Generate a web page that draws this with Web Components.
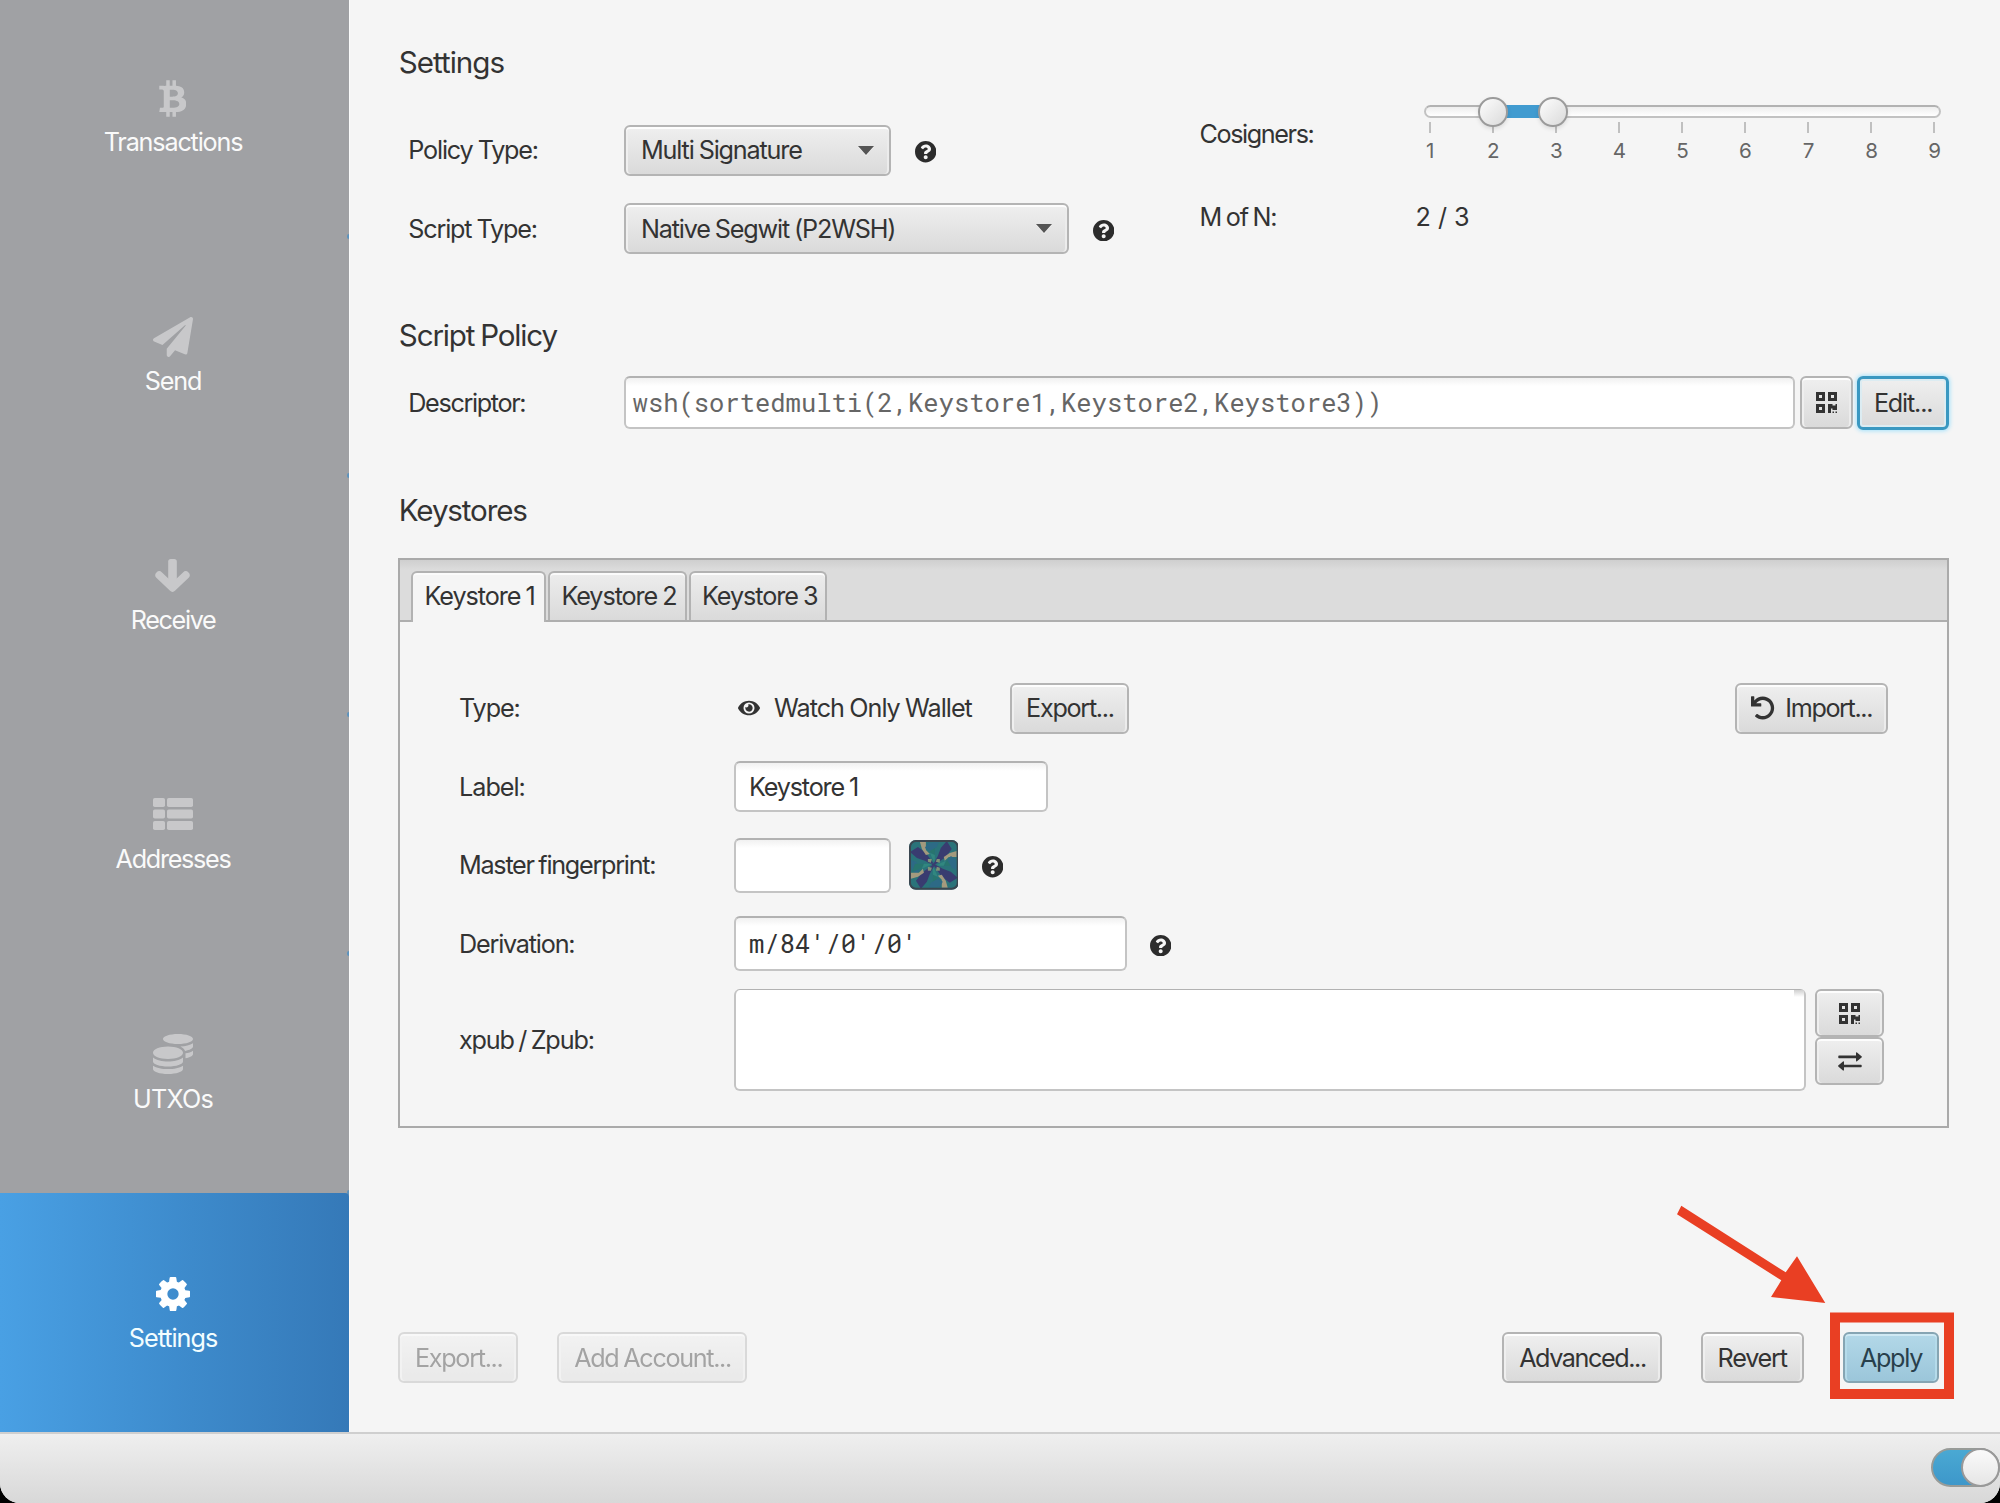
<!DOCTYPE html>
<html lang="en">
<head>
<meta charset="utf-8">
<title>Wallet Settings</title>
<style>
    html, body { margin: 0; height: 100%; background: #000; }
    body {
        overflow: hidden;
        font-family: Inter, "Open Sans", sans-serif;
        font-size: 25.2px;
        letter-spacing: -1.18px;
        word-spacing: -0.8px;
        line-height: 32px;
        color: #333;
        white-space: nowrap;
    }
    .pair { display: flex; height: 171.2px; }
    .left { width: 801.5px; padding-top: 43px; box-sizing: border-box; display: flex; flex-direction: column; gap: 28px; }
    .right { flex: 1; display: flex; flex-direction: column; }
    .actions { display: flex; align-items: center; margin-top: 204.3px; }
</style>
</head>
<body>
<wallet-window>
    <nav-item slot="nav" icon="bitcoin">Transactions</nav-item>
    <nav-item slot="nav" icon="plane">Send</nav-item>
    <nav-item slot="nav" icon="down" style="letter-spacing:-1.35px">Receive</nav-item>
    <nav-item slot="nav" icon="list" style="letter-spacing:-1.3px">Addresses</nav-item>
    <nav-item slot="nav" icon="coins" style="letter-spacing:-.8px">UTXOs</nav-item>
    <nav-item slot="nav" icon="cog" style="letter-spacing:-1px" selected>Settings</nav-item>

    <section-title style="margin-top:42px">Settings</section-title>
    <div class="pair">
        <div class="left">
            <form-row style="--h:50.4px"><span slot="label">Policy Type:</span>
                <combo-box style="width:267px">Multi Signature</combo-box>
                <help-mark style="margin-left:24px"></help-mark>
            </form-row>
            <form-row style="--h:50.4px"><span slot="label">Script Type:</span>
                <combo-box style="width:445px">Native Segwit (P2WSH)</combo-box>
                <help-mark style="margin-left:23.5px"></help-mark>
            </form-row>
        </div>
        <div class="right">
            <form-row style="--h:76px; --indent:0px; --label:224px; padding-top:13.5px"><span slot="label" style="letter-spacing:-1.4px">Cosigners:</span>
                <range-slider min="1" max="9" low="2" high="3"></range-slider>
            </form-row>
            <form-row style="--h:40px; --indent:0px; --label:216px; padding-top:25px"><span slot="label" style="letter-spacing:-1.2px; word-spacing:-1.2px">M of N:</span><span style="letter-spacing:0; word-spacing:0">2 / 3</span></form-row>
        </div>
    </div>

    <section-title style="margin-top:61.8px; letter-spacing:-1.15px; word-spacing:-1.4px">Script Policy</section-title>
    <form-row style="--h:54px; margin-top:21px"><span slot="label" style="letter-spacing:-1.35px">Descriptor:</span>
        <text-field mono dim style="width:1171.4px; height:53px; --pad:6.6px">wsh(sortedmulti(2,Keystore1,Keystore2,Keystore3))</text-field>
        <fx-button style="width:53.7px; height:53px; margin-left:4.4px"><fx-icon name="qr" style="width:21px; height:21px"></fx-icon></fx-button>
        <fx-button focused style="width:92.5px; height:54px; margin-left:3.4px">Edit...</fx-button>
    </form-row>

    <section-title style="margin-top:60px; letter-spacing:-1.15px">Keystores</section-title>
    <keystore-tabs style="margin-top:28.4px">
        <form-row style="--h:50.4px; margin-top:61.2px"><span slot="label" style="letter-spacing:-1.1px">Type:</span>
            <fx-icon name="eye" style="width:22px; height:20px; margin-left:4px"></fx-icon>
            <span style="width:235.5px; margin-left:14px; letter-spacing:-1px">Watch Only Wallet</span>
            <fx-button style="width:119.8px; letter-spacing:-1.3px; --dx:1px">Export...</fx-button>
            <fx-button style="width:153px; margin-left:605.4px; letter-spacing:-1.4px; --dx:1px"><fx-icon name="undo" style="width:23.5px; height:24px; margin-right:10.5px"></fx-icon>Import...</fx-button>
        </form-row>
        <form-row style="--h:50.4px; margin-top:28px"><span slot="label" style="letter-spacing:-1px">Label:</span>
            <text-field style="width:313.5px">Keystore 1</text-field>
        </form-row>
        <form-row style="--h:54.6px; margin-top:26.2px"><span slot="label" style="letter-spacing:-1.27px; word-spacing:-1.2px">Master fingerprint:</span>
            <text-field style="width:157px"></text-field>
            <life-hash style="margin-left:17.8px"></life-hash>
            <help-mark style="margin-left:23.4px"></help-mark>
        </form-row>
        <form-row style="--h:54.6px; margin-top:23.7px"><span slot="label" style="letter-spacing:-1.2px">Derivation:</span>
            <text-field mono style="width:392.5px; --pad:13px">m/84'/0'/0'</text-field>
            <help-mark style="margin-left:23.5px"></help-mark>
        </form-row>
        <form-row style="--h:101.8px; margin-top:18.1px"><span slot="label" style="letter-spacing:-1.15px; word-spacing:-1.5px">xpub / Zpub:</span>
            <text-field area style="width:1071.5px"></text-field>
            <div style="align-self:flex-start; margin-left:9.9px">
                <fx-button style="width:68.4px; height:48px"><fx-icon name="qr" style="width:21px; height:21px; margin-top:1px"></fx-icon></fx-button>
                <fx-button style="width:68.4px; height:48px"><fx-icon name="swap" style="width:24px; height:19px; margin-top:1px"></fx-icon></fx-button>
            </div>
        </form-row>
    </keystore-tabs>

    <div class="actions">
        <fx-button disabled style="width:119.5px; letter-spacing:-1.3px; --dx:2px">Export...</fx-button>
        <fx-button disabled style="width:189.7px; margin-left:39.7px; letter-spacing:-1.35px; --dx:1px">Add Account...</fx-button>
        <fx-button style="width:159.4px; margin-left:755.4px; letter-spacing:-1.42px; --dx:1px">Advanced...</fx-button>
        <fx-button style="width:103px; margin-left:39px; letter-spacing:-1.2px">Revert</fx-button>
        <fx-button primary style="width:96px; margin-left:39.3px; letter-spacing:-1.3px">Apply</fx-button>
    </div>

    <toggle-switch slot="status"></toggle-switch>
    <call-out slot="overlay"></call-out>
</wallet-window>

<script>
const ICONS = {
    bitcoin: ['0 0 384 512', '<path d="M310.204 242.638c27.73-14.18 45.377-39.39 41.28-81.3-5.358-57.351-52.458-76.573-114.85-81.929V0h-48.528v77.203c-12.605 0-25.525.315-38.444.63V0h-48.528v79.409c-17.842.539-38.622.276-97.37 0v51.678c38.314-.678 58.417-3.14 63.023 21.427v217.429c-2.925 19.492-18.524 16.685-53.255 16.071L3.765 443.68c88.481 0 97.37.315 97.37.315V512h48.528v-67.06c13.234.315 26.154.315 38.444.315V512h48.528v-68.005c81.299-4.412 135.647-24.894 142.895-101.467 5.671-61.446-23.314-88.862-69.326-99.89zM150.608 134.553c27.415 0 113.126-8.507 113.126 48.528 0 54.515-85.71 48.212-113.126 48.212v-96.74zm0 251.776V279.821c32.772 0 133.127-9.138 133.127 53.255-.001 60.186-100.355 53.253-133.127 53.253z"/>'],
    plane: ['0 0 512 512', '<path d="M476 3.2L12.5 270.6c-18.1 10.4-15.8 35.6 2.2 43.2L121 358.4l287.3-253.2c5.5-4.9 13.3 2.6 8.6 8.3L176 407v80.5c0 23.6 28.5 32.9 42.5 15.8L282 426l124.6 52.2c14.2 6 30.4-2.9 33-18.2l72-432C515 7.8 493.3-6.8 476 3.2z"/>'],
    down: ['0 0 35 34', '<rect x="13.2" width="8.600" height="28" rx="2.600"/><path d="M4.300 16.200L17.500 28.800L30.700 16.200" fill="none" stroke="#fff" stroke-width="7.800" stroke-linecap="round" stroke-linejoin="round"/>'],
    list: ['0 0 40 32', '<rect width="12" height="9" rx="1.8"/><rect x="14" width="26" height="9" rx="1.8"/><rect y="11.5" width="12" height="9" rx="1.8"/><rect x="14" y="11.5" width="26" height="9" rx="1.8"/><rect y="23" width="12" height="9" rx="1.8"/><rect x="14" y="23" width="26" height="9" rx="1.8"/>'],
    coins: ['0 0 512 512', '<path d="M0 405.3V448c0 35.3 86 64 192 64s192-28.7 192-64v-42.7C342.7 434.4 267.2 448 192 448S41.3 434.4 0 405.3zM320 128c106 0 192-28.7 192-64S426 0 320 0 128 28.7 128 64s86 64 192 64zM0 300.4V352c0 35.3 86 64 192 64s192-28.7 192-64v-51.6c-41.3 34-116.9 51.6-192 51.6S41.3 334.4 0 300.4zm416 11c57.3-11.1 96-31.7 96-55.4v-42.7c-23.2 16.4-57.3 27.6-96 34.5v63.6zM192 160C86 160 0 195.8 0 240s86 80 192 80 192-35.8 192-80-86-80-192-80zm219.3 56.3c60-10.8 100.7-32 100.7-56.3v-42.7c-35.5 25.1-96.5 38.6-160.7 41.8 29.5 14.3 51.2 33.5 60 57.2z"/>'],
    cog: ['0 128 1536 1536', '<path d="M1024 896q0-106-75-181t-181-75-181 75-75 181 75 181 181 75 181-75 75-181zm512-109v222q0 12-8 23t-20 13l-185 28q-19 54-39 91 35 50 107 138 10 12 10 25t-9 23q-27 37-99 108t-94 71q-12 0-26-9l-138-108q-44 23-91 38-16 136-29 186-7 28-36 28h-222q-14 0-24.5-8.5t-11.5-21.5l-28-184q-49-16-90-37l-141 107q-10 9-25 9-14 0-25-11-126-114-165-168-7-10-7-23 0-12 8-23 15-21 51-66.500t54-70.500q-27-50-41-99l-183-27q-13-2-21-12.500t-8-23.500v-222q0-12 8-23t19-13l186-28q14-46 39-92-40-57-107-138-10-12-10-24 0-10 9-23 26-36 98.500-107.500t94.500-71.500q13 0 26 10l138 107q44-23 91-38 16-136 29-186 7-28 36-28h222q14 0 24.500 8.500t11.500 21.500l28 184q49 16 90 37l142-107q9-9 24-9 13 0 25 10 129 119 165 170 7 8 7 22 0 12-8 23-15 21-51 66.500t-54 70.500q26 50 41 98l183 28q13 2 21 12.500t8 23.500z"/>'],
    help: ['8 8 496 496', '<path d="M504 256c0 136.997-111.043 248-248 248S8 392.997 8 256C8 119.083 119.043 8 256 8s248 111.083 248 248zM262.655 90c-54.497 0-89.255 22.957-116.549 63.758-3.536 5.286-2.353 12.415 2.715 16.258l34.699 26.31c5.205 3.947 12.621 3.008 16.665-2.122 17.864-22.658 30.113-35.797 57.303-35.797 20.429 0 45.698 13.148 45.698 32.958 0 14.976-12.363 22.667-32.534 33.976C247.128 238.528 216 254.941 216 296v4c0 6.627 5.373 12 12 12h56c6.627 0 12-5.373 12-12v-1.333c0-28.462 83.186-29.647 83.186-106.667 0-58.002-60.165-102-116.531-102zM256 338c-25.365 0-46 20.635-46 46 0 25.364 20.635 46 46 46s46-20.636 46-46c0-25.364-20.635-46-46-46z"/>'],
    eye: ['0 0 576 512', '<path d="M572.52 241.4C518.29 135.59 410.93 64 288 64S57.68 135.64 3.48 241.41a32.35 32.35 0 0 0 0 29.19C57.71 376.41 165.07 448 288 448s230.32-71.64 284.52-177.41a32.35 32.35 0 0 0 0-29.19zM288 400a144 144 0 1 1 144-144 143.93 143.93 0 0 1-144 144zm0-240a95.31 95.31 0 0 0-25.31 3.79 47.85 47.85 0 0 1-66.9 66.9A95.78 95.78 0 1 0 288 160z"/>'],
    undo: ['0 0 512 512', '<path d="M212.333 224.333H12c-6.627 0-12-5.373-12-12V12C0 5.373 5.373 0 12 0h48c6.627 0 12 5.373 12 12v78.112C117.773 39.279 184.26 7.47 258.175 8.007c136.906.994 246.448 111.623 246.157 248.532C504.041 393.258 393.12 504 256.333 504c-64.089 0-122.496-24.313-166.51-64.215-5.099-4.622-5.334-12.554-.467-17.42l33.967-33.967c4.474-4.474 11.662-4.717 16.401-.525C170.76 415.336 211.58 432 256.333 432c97.268 0 176-78.716 176-176 0-97.267-78.716-176-176-176-58.496 0-110.28 28.476-142.274 72.333h98.274c6.627 0 12 5.373 12 12v48c0 6.627-5.373 12-12 12z"/>'],
    qr: ['0 32 448 448', '<path d="M0 224h192V32H0v192zM64 96h64v64H64V96zm192-64v192h192V32H256zm128 128h-64V96h64v64zM0 480h192V288H0v192zm64-128h64v64H64v-64zm352-64h32v128h-96v-32h-32v96h-64V288h96v32h64v-32zm0 160h32v32h-32v-32zm-64 0h32v32h-32v-32z"/>'],
    swap: ['0 0 24 19', '<path d="M1 3.6h17V1q0-1.2 1-.5l4.5 3.7q.8.7 0 1.4l-4.5 3.7q-1 .6-1-.5V6.2H1q-.7 0-.7-.7V4.3q0-.7.7-.7zM23 12.7H6v-2.6q0-1.2-1-.5L.5 13.3q-.8.7 0 1.4L5 18.4q1 .6 1-.5v-2.6h17q.7 0 .7-.7v-1.2q0-.7-.7-.7z"/>']
};

class FxIcon extends HTMLElement {
    connectedCallback() {
        const [box, body] = ICONS[this.getAttribute('name')];
        this.attachShadow({ mode: 'open' }).innerHTML = `
            <style>
                :host { display: block; flex: none; }
                svg { display: block; width: 100%; height: 100%; fill: currentColor; }
            </style>
            <svg viewBox="${box}">${body}</svg>
        `;
    }
}

class WalletWindow extends HTMLElement {
    connectedCallback() {
        this.attachShadow({ mode: 'open' }).innerHTML = `
            <style>
                :host {
                    display: grid;
                    grid-template: 1432px 71px / 350px 1fr;
                    position: relative;
                    width: 2000px;
                    height: 1503px;
                    overflow: hidden;
                    background: #f5f5f5;
                    border-radius: 0 0 20px 20px;
                }
                nav { background: #a0a1a4; border-right: 1px solid #fbfbfb; overflow: hidden; }
                .items { margin-top: -2.6px; }
                main { padding-left: 48px; overflow: hidden; display: flow-root; }
                footer {
                    grid-column: 1 / 3;
                    display: flex;
                    justify-content: flex-end;
                    box-sizing: border-box;
                    border-top: 2px solid #cfcfcf;
                    background: linear-gradient(#efefef, #d8d8d8);
                    padding-top: 14px;
                }
            </style>
            <nav><div class="items"><slot name="nav"></slot></div></nav>
            <main><slot></slot></main>
            <footer><slot name="status"></slot></footer>
            <slot name="overlay"></slot>
        `;
    }
}

class NavItem extends HTMLElement {
    connectedCallback() {
        // width, height, upward nudge
        const sizes = { bitcoin: [27.5, 37, 0], plane: [40, 40, 2], down: [35, 34, 2], list: [40, 32, 3.5], coins: [40, 40, 2], cog: [34, 34, 0] };
        const icon = this.getAttribute('icon');
        const [w, h, up] = sizes[icon];
        this.attachShadow({ mode: 'open' }).innerHTML = `
            <style>
                :host {
                    display: flex;
                    flex-direction: column;
                    align-items: center;
                    position: relative;
                    box-sizing: border-box;
                    height: 239.2px;
                    padding: 83px 4px 0 0;
                    color: #fafafa;
                }
                :host::after {
                    content: '';
                    position: absolute;
                    right: 0;
                    bottom: -2px;
                    width: 2px;
                    height: 5px;
                    border-radius: 2px 0 0 2px;
                    background: #5d93bd;
                }
                :host([selected]) {
                    background: linear-gradient(to right, #49a0e4, #3d8acb 55%, #3579b8);
                    border-radius: 0 4px 0 0;
                    color: #f2fdff;
                }
                :host([selected])::after { display: none; }
                .icon { height: 36px; display: flex; align-items: center; opacity: .42; }
                :host([selected]) .icon { opacity: 1; color: #fff; }
                fx-icon { width: ${w}px; height: ${h}px; margin-bottom: ${up}px; color: #fff; }
                .text { margin-top: 9.5px; padding-left: 1px; }
            </style>
            <div class="icon"><fx-icon name="${icon}"></fx-icon></div>
            <div class="text"><slot></slot></div>
        `;
    }
}

class SectionTitle extends HTMLElement {
    connectedCallback() {
        this.attachShadow({ mode: 'open' }).innerHTML = `
            <style>:host { display: block; height: 40px; line-height: 40px; font-size: 29.6px; letter-spacing: -1px; padding-left: 0.8px; }</style>
            <slot></slot>
        `;
    }
}

class FormRow extends HTMLElement {
    connectedCallback() {
        this.attachShadow({ mode: 'open' }).innerHTML = `
            <style>
                :host { display: flex; align-items: center; height: var(--h, 50px); flex: none; }
                .label { flex: none; box-sizing: border-box; width: var(--label, 226px); padding-left: var(--indent, 10.3px); }
            </style>
            <div class="label"><slot name="label"></slot></div>
            <slot></slot>
        `;
    }
}

class FxButton extends HTMLElement {
    connectedCallback() {
        this.attachShadow({ mode: 'open' }).innerHTML = `
            <style>
                :host {
                    display: flex;
                    flex: none;
                    align-items: center;
                    justify-content: center;
                    box-sizing: border-box;
                    height: 51px;
                    padding-left: var(--dx, 0);
                    border: 2px solid #b4b4b4;
                    border-radius: 6px;
                    background: linear-gradient(#efefef, #dadada);
                    box-shadow: inset 0 2px 0 #fdfdfd, inset 2px 0 0 #efefef, inset -2px 0 0 #ececec;
                }
                :host([focused]) {
                    border-color: #3a98c1;
                    border-width: 3px;
                    box-shadow: 0 0 4px 1px #a5e2fb, inset 0 0 0 2px #dcecf2;
                }
                :host([primary]) {
                    border-color: #86a5b3;
                    background: linear-gradient(#b3d8e8, #9bc6da);
                    box-shadow: inset 0 2px 0 #cfe9f3, inset 2px 0 0 #b5dbea, inset -2px 0 0 #b5dbea;
                    color: #28404c;
                }
                :host([disabled]) { opacity: .42; }
            </style>
            <slot></slot>
        `;
    }
}

class ComboBox extends HTMLElement {
    connectedCallback() {
        this.attachShadow({ mode: 'open' }).innerHTML = `
            <style>
                :host {
                    display: flex;
                    align-items: center;
                    justify-content: space-between;
                    box-sizing: border-box;
                    height: 51px;
                    padding: 0 15.5px 0 15px;
                    border: 2px solid #b4b4b4;
                    border-radius: 6px;
                    background: linear-gradient(#efefef, #dadada);
                    box-shadow: inset 0 2px 0 #fdfdfd, inset 2px 0 0 #efefef, inset -2px 0 0 #ececec;
                }
                i { border: 8.7px solid transparent; border-top: 9px solid #555; border-bottom: 0; filter: drop-shadow(0 1px 0 #f4f4f4); }
            </style>
            <span><slot></slot></span><i></i>
        `;
    }
}

class TextField extends HTMLElement {
    connectedCallback() {
        this.attachShadow({ mode: 'open' }).innerHTML = `
            <style>
                :host {
                    display: flex;
                    flex: none;
                    align-items: center;
                    box-sizing: border-box;
                    height: var(--h, 50px);
                    padding-left: var(--pad, 13px);
                    border: 2px solid #c4c4c4;
                    border-top-color: #b2b2b2;
                    border-radius: 6px;
                    background: linear-gradient(#f1f1f1, #fff 8px);
                }
                :host([area]) { background: #fff; border-top-width: 1.5px; }
                :host([area])::after {
                    content: '';
                    align-self: flex-start;
                    margin-left: auto;
                    width: 10px;
                    height: 7px;
                    background: linear-gradient(#d0d0d0, #fff);
                }
                :host([mono]) { font: 25.5px "Roboto Mono", "Liberation Mono", monospace; letter-spacing: 0; padding-bottom: 1px; }
                :host([dim]) { color: #666; }
            </style>
            <slot></slot>
        `;
    }
}

class HelpMark extends HTMLElement {
    connectedCallback() {
        this.attachShadow({ mode: 'open' }).innerHTML = `
            <style>
                :host { display: block; padding-top: 3.5px; color: #2c2c2c; }
                fx-icon { width: 21.4px; height: 21.4px; }
            </style>
            <fx-icon name="help"></fx-icon>
        `;
    }
}

class RangeSlider extends HTMLElement {
    connectedCallback() {
        const min = +this.getAttribute('min');
        const max = +this.getAttribute('max');
        const step = 63.06;
        const x = n => 6.5 + (n - min) * step;
        let ticks = '';
        for (let n = min; n <= max; n++) ticks += `<li>${n}</li>`;
        // thumb centres, the upper one sits slightly left of its tick
        const low = x(+this.getAttribute('low')) - 0.3;
        const high = x(+this.getAttribute('high')) - 3.1;
        this.attachShadow({ mode: 'open' }).innerHTML = `
            <style>
                :host { display: block; position: relative; width: 517px; height: 63px; padding-top: 8px; box-sizing: border-box; margin-top: -10px; }
                .track {
                    box-sizing: border-box;
                    height: 13px;
                    border: 2px solid #c2c2c2;
                    border-top-color: #b2b2b2;
                    border-radius: 7px;
                    background: linear-gradient(#eee, #fff);
                }
                .fill { position: absolute; top: 8px; height: 13px; left: ${low}px; width: ${high - low}px; background: #419bd0; }
                .thumb {
                    position: absolute;
                    top: 0;
                    box-sizing: border-box;
                    width: 29.5px;
                    height: 29.5px;
                    margin-left: -14.7px;
                    border: 2px solid #9b9b9b;
                    border-radius: 50%;
                    background: linear-gradient(135deg, #fdfdfd, #dadada);
                    box-shadow: 0 2px 4px rgba(0,0,0,.1);
                }
                ul { display: grid; grid-template-columns: repeat(${max - min + 1}, ${step}px); margin: 4px 0 0 ${6.5 - step / 2}px; padding: 0; list-style: none; }
                li { text-align: center; font-size: 20.6px; line-height: 28px; letter-spacing: -0.5px; color: #666; }
                li::before { content: ''; display: block; width: 2px; height: 11px; margin: 0 auto 4px; background: #c0c0c0; }
            </style>
            <div class="track"></div>
            <ul>${ticks}</ul>
            <div class="fill"></div>
            <div class="thumb" style="left:${low}px"></div>
            <div class="thumb" style="left:${high}px"></div>
        `;
    }
}

class KeystoreTabs extends HTMLElement {
    connectedCallback() {
        this.attachShadow({ mode: 'open' }).innerHTML = `
            <style>
                :host { display: block; box-sizing: border-box; width: 1551px; height: 569.4px; border: 2px solid #aaa; }
                .bar {
                    display: flex;
                    align-items: flex-end;
                    gap: 2.4px;
                    box-sizing: border-box;
                    height: 61.5px;
                    padding-left: 11px;
                    border-bottom: 2px solid #aeaeae;
                    background: linear-gradient(#cfcfcf, #dcdcdc 10px);
                }
                .tab {
                    box-sizing: border-box;
                    width: 138.2px;
                    height: 49px;
                    padding: 7px 0 0 11px;
                    border: 2px solid #b2b2b2;
                    border-bottom: 0;
                    border-radius: 6px 6px 0 0;
                    background: linear-gradient(#ededed, #dadada);
                    box-shadow: inset 0 2px 0 #fbfbfb;
                    letter-spacing: -1.08px;
                }
                .tab:first-child { width: 135px; height: 51px; margin-bottom: -2px; padding-left: 11.5px; background: #f5f5f5; }
                .body { --label: 275px; --indent: 0px; padding-left: 59px; display: flow-root; }
            </style>
            <div class="bar"><div class="tab">Keystore 1</div><div class="tab">Keystore 2</div><div class="tab">Keystore 3</div></div>
            <div class="body"><slot></slot></div>
        `;
    }
}

class LifeHash extends HTMLElement {
    connectedCallback() {
        // one arm of the pinwheel, turned four times
        const arm = `
            <path d="M1 12L9 7L17 13L25 24L25 26L16 21L8 18z" fill="#393c70"/>
            <path d="M11 2h6l0 8 4 4-4 1-4-6z" fill="#a39a7e"/>
            <path d="M2 20l5 2 4 7-3 5-5-3z" fill="#2d6a86"/>
            <path d="M19 19l4 0-1 4-3-1z" fill="#7f9278"/>
            <path d="M18 3l8 3v9l-5-3z" fill="#28756f"/>
            <path d="M21 13l5 2v9z" fill="#31877f"/>`;
        this.attachShadow({ mode: 'open' }).innerHTML = `
            <style>
                :host { display: block; flex: none; width: 49.7px; height: 49.7px; }
                svg { display: block; width: 100%; height: 100%; }
            </style>
            <svg viewBox="0 0 50 50">
                <defs>
                    <clipPath id="c"><rect width="50" height="50" rx="7"/></clipPath>
                    <filter id="soft"><feGaussianBlur stdDeviation="0.8" color-interpolation-filters="sRGB"/></filter>
                </defs>
                <g clip-path="url(#c)">
                    <rect width="50" height="50" fill="#2a737a"/>
                    <g filter="url(#soft)">${[0, 90, 180, 270].map(a => `<g transform="rotate(${a} 25 25)">${arm}</g>`).join('')}</g>
                </g>
                <rect x="1" y="1" width="48" height="48" rx="6" fill="none" stroke="#3a4650" stroke-width="2"/>
            </svg>
        `;
    }
}

class ToggleSwitch extends HTMLElement {
    connectedCallback() {
        this.attachShadow({ mode: 'open' }).innerHTML = `
            <style>
                :host { display: block; box-sizing: border-box; width: 69px; height: 39px; border: 2px solid #979b98; border-radius: 20px; background: linear-gradient(#4aa9d3, #3d97ca); }
                i { display: block; box-sizing: border-box; width: 39px; height: 39px; margin: -2px 0 0 28px; border: 2px solid #999; border-radius: 50%; background: linear-gradient(#fafafa, #e6e6e6); }
            </style>
            <i></i>
        `;
    }
}

class CallOut extends HTMLElement {
    connectedCallback() {
        this.attachShadow({ mode: 'open' }).innerHTML = `
            <style>
                :host { position: absolute; left: 1670px; top: 1200px; width: 290px; height: 205px; }
                svg { display: block; fill: #e93f23; }
            </style>
            <svg width="290" height="205">
                <path d="M11.3 5.7L115.7 72.3L127 56.3L155.3 103L101 97L111.3 80.3L7 14.3z"/>
                <rect x="165" y="117.5" width="114" height="76.5" fill="none" stroke="#e93f23" stroke-width="10"/>
            </svg>
        `;
    }
}

customElements.define('fx-icon', FxIcon);
customElements.define('wallet-window', WalletWindow);
customElements.define('nav-item', NavItem);
customElements.define('section-title', SectionTitle);
customElements.define('form-row', FormRow);
customElements.define('fx-button', FxButton);
customElements.define('combo-box', ComboBox);
customElements.define('text-field', TextField);
customElements.define('help-mark', HelpMark);
customElements.define('range-slider', RangeSlider);
customElements.define('keystore-tabs', KeystoreTabs);
customElements.define('life-hash', LifeHash);
customElements.define('toggle-switch', ToggleSwitch);
customElements.define('call-out', CallOut);
</script>
</body>
</html>
